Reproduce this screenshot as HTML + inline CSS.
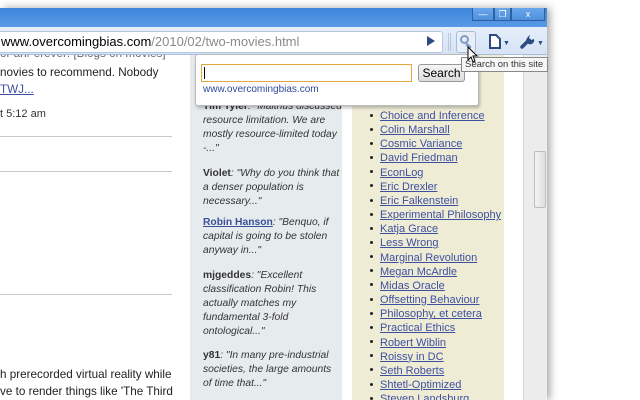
<!DOCTYPE html>
<html><head><style>
*{margin:0;padding:0;box-sizing:border-box}
html,body{width:640px;height:400px;overflow:hidden}
body{background:#fff;position:relative;font-family:"Liberation Sans",Arial,sans-serif}
.a{position:absolute}
.win{left:0;top:8px;width:547px;height:392px;box-shadow:3px 0 8px rgba(0,0,0,.35);background:#fff}
.title{left:0;top:8px;width:547px;height:20px;background:linear-gradient(#3f86dc,#5a9ae6)}
.tb{left:0;top:27px;width:547px;height:28px;background:linear-gradient(#e6eefa,#d5e3f6);border-bottom:1px solid #a9bedb}
.addr{left:-4px;top:31px;width:447px;height:22px;background:#fff;border:1px solid #b9c8de;border-radius:3px;font-size:13px;line-height:20px;padding-left:4px;color:#000}
.addr span{color:#8a8a8a}
.ctl{top:8px;height:13px;border:1px solid #2f5f9e;border-top:none;background:linear-gradient(#6aa6ea,#4f8fdd);color:#fff;font-size:9px;text-align:center;line-height:12px}
.mid{left:190px;top:55px;width:152px;height:345px;background:#e6ecee}
.side{left:352px;top:55px;width:152px;height:345px;background:#efecd6}
.sb{left:523px;top:55px;width:24px;height:345px;background:#ececec;border-left:1px solid #d6d6d6}
.thumb{left:534px;top:151px;width:12px;height:57px;background:linear-gradient(90deg,#f4f4f4,#dedede);border:1px solid #bdbdbd;border-radius:2px}
.mt{left:203px;font-size:10.3px;line-height:14px;color:#333;font-style:italic;white-space:nowrap}
.mt b{font-style:normal;color:#333}
.mt u{font-style:normal;font-weight:bold;color:#3a4f97}
ul{position:absolute;left:370px;top:109px;font-size:11px;line-height:14.15px;list-style:none}
li a{color:#3e50a0;text-decoration:underline}
li:before{content:"";display:inline-block;width:3px;height:3px;background:#222;border-radius:50%;margin:0 7px 2px 0;vertical-align:middle}
.lt{font-size:11.7px;color:#222;left:0;white-space:nowrap}
hr{position:absolute;left:0;width:172px;border:none;border-top:1px solid #c8c8c8}
.pop{left:195px;top:54px;width:284px;height:52px;background:#fff;border:1px solid #bbb;border-radius:3px;box-shadow:1px 2px 3px rgba(0,0,0,.25)}
</style></head><body>
<div class="a win"></div>
<div class="a lt" style="top:47px;color:#666">or anr erever: [Blogs on movies]</div>
<div class="a title"></div>
<div class="a ctl" style="left:472px;width:22px">&#8212;</div>
<div class="a ctl" style="left:494px;width:17px">&#10064;</div>
<div class="a ctl" style="left:511px;width:34px">x</div>
<div class="a tb"></div>
<div class="a addr">www.overcomingbias.com<span>/2010/02/two-movies.html</span></div>
<div class="a" style="left:427px;top:36px;width:0;height:0;border-left:8px solid #2c4c80;border-top:5px solid transparent;border-bottom:5px solid transparent"></div>
<div class="a" style="left:448px;top:33px;width:3px;height:18px;border-left:1px solid #bcc8da;border-right:1px solid #bcc8da"></div>
<div class="a" style="left:456px;top:31px;width:20px;height:22px;border:1px solid #a9bcd6;border-radius:3px;background:#e8eef8"></div>
<div class="a" style="left:460px;top:35px;width:9px;height:9px;border:2px solid #7d9cc4;border-radius:50%"></div>
<div class="a" style="left:467px;top:43px;width:3px;height:6px;background:#7d9cc4;transform:rotate(-45deg)"></div>
<svg class="a" style="left:489px;top:34px" width="12" height="15" viewBox="0 0 12 15"><path d="M1 1 H7 L11 5 V14 H1 Z" fill="#fff" stroke="#2c4c80" stroke-width="2"/></svg>
<div class="a" style="left:503px;top:40px;font-size:7px;color:#2c4c80">&#9660;</div>
<svg class="a" style="left:520px;top:33px" width="16" height="16" viewBox="0 0 16 16"><path d="M2 14 L9 7" stroke="#2c4c80" stroke-width="3.5" stroke-linecap="round"/><path d="M8 4 A4 4 0 1 0 14 6 L11 7 L9 5 L10 2 A4 4 0 0 0 8 4Z" fill="#2c4c80"/></svg>
<div class="a" style="left:537px;top:40px;font-size:7px;color:#2c4c80">&#9660;</div>

<div class="a lt" style="top:66px">novies to recommend. Nobody</div>
<div class="a lt" style="top:83px;color:#3e50a0;text-decoration:underline">TWJ...</div>
<div class="a" style="top:108px;left:0;font-size:11px;color:#333">t 5:12 am</div>
<hr style="top:136px"><hr style="top:171px"><hr style="top:294px">
<div class="a lt" style="top:368px">h prerecorded virtual reality while</div>
<div class="a lt" style="top:385px">ve to render things like 'The Third</div>

<div class="a mid"></div>
<div class="a mt" style="top:100px"><b>Tim Tyler</b>: "Malthus discussed<br>resource limitation. We are<br>mostly resource-limited today<br>-..."</div>
<div class="a mt" style="top:167px"><b>Violet</b>: "Why do you think that<br>a denser population is<br>necessary..."</div>
<div class="a mt" style="top:216px"><u>Robin Hanson</u>: "Benquo, if<br>capital is going to be stolen<br>anyway in..."</div>
<div class="a mt" style="top:269px"><b>mjgeddes</b>: "Excellent<br>classification Robin! This<br>actually matches my<br>fundamental 3-fold<br>ontological..."</div>
<div class="a mt" style="top:349px"><b>y81</b>: "In many pre-industrial<br>societies, the large amounts<br>of time that..."</div>

<div class="a side"></div>
<ul>
<li><a>Choice and Inference</a></li><li><a>Colin Marshall</a></li><li><a>Cosmic Variance</a></li><li><a>David Friedman</a></li><li><a>EconLog</a></li><li><a>Eric Drexler</a></li><li><a>Eric Falkenstein</a></li><li><a>Experimental Philosophy</a></li><li><a>Katja Grace</a></li><li><a>Less Wrong</a></li><li><a>Marginal Revolution</a></li><li><a>Megan McArdle</a></li><li><a>Midas Oracle</a></li><li><a>Offsetting Behaviour</a></li><li><a>Philosophy, et cetera</a></li><li><a>Practical Ethics</a></li><li><a>Robert Wiblin</a></li><li><a>Roissy in DC</a></li><li><a>Seth Roberts</a></li><li><a>Shtetl-Optimized</a></li><li><a>Steven Landsburg</a></li>
</ul>
<div class="a sb"></div>
<div class="a thumb"></div>

<div class="a pop"></div>
<div class="a" style="left:201px;top:64px;width:211px;height:18px;border:1px solid #e0a940;background:#fff"></div>
<div class="a" style="left:204px;top:67px;width:1px;height:12px;background:#000"></div>
<div class="a" style="left:418px;top:64px;width:47px;height:18px;border:1px solid #999;border-radius:3px;background:linear-gradient(#f6f6f6,#dcdcdc);font-size:12px;text-align:center;line-height:16px">Search</div>
<div class="a" style="left:203px;top:84px;font-size:10px;color:#2f4a9a">www.overcomingbias.com</div>
<div class="a" style="left:461px;top:57px;width:87px;height:15px;background:#f7f7f7;border:1px solid #888;font-size:9.5px;line-height:13px;padding-left:3px;color:#333;white-space:nowrap;overflow:hidden">Search on this site</div>
<svg class="a" style="left:467px;top:46px" width="12" height="18" viewBox="0 0 12 18"><path d="M1 1 L1 14 L4 11 L6 16 L8 15 L6 10 L10 10 Z" fill="#fff" stroke="#000" stroke-width="1"/></svg>
</body></html>
